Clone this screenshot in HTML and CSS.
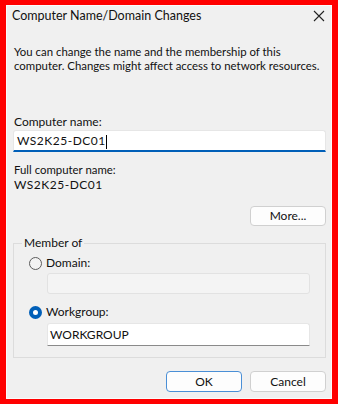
FILE: index.html
```html
<!DOCTYPE html>
<html>
<head>
<meta charset="utf-8">
<link rel="stylesheet" href="styles.css">
</head>
<body>
<div class="dialog">
  <div class="titlebar">
    <span class="title">Computer Name/Domain Changes</span>
    <svg class="close" width="12" height="12" viewBox="0 0 12 12"><path d="M1 1 L11 11 M11 1 L1 11" stroke="#222" stroke-width="1.1" fill="none"/></svg>
  </div>
  <div class="content">
    <p class="desc">You can change the name and the membership of this<br>computer. Changes might affect access to network resources.</p>
    <div class="label lbl-name">Computer name:</div>
    <div class="input focused"><span class="caps">WS2K25-DC01</span><span class="caret"></span></div>
    <div class="label lbl-full">Full computer name:</div>
    <div class="label lbl-value caps">WS2K25-DC01</div>
    <div class="more-row"><button class="btn">More...</button></div>
    <fieldset class="group">
      <legend>Member of</legend>
      <div class="radio-row first"><span class="radio"></span><span>Domain:</span></div>
      <div class="input disabled"></div>
      <div class="radio-row second"><span class="radio checked"></span><span>Workgroup:</span></div>
      <div class="input wg">WORKGROUP</div>
    </fieldset>
    <div class="actions">
      <button class="btn default">OK</button>
      <button class="btn">Cancel</button>
    </div>
  </div>
</div>
</body>
</html>
```
FILE: styles.css
```css
html, body {
  margin: 0;
  padding: 0;
  background: #ff0000;
}
body {
  width: 338px;
  height: 404px;
  overflow: hidden;
  font-family: Lato, "Noto Sans", sans-serif;
  font-size: 12px;
  color: #111;
}
.dialog {
  margin: 5px 0 0 6px;
  width: 324px;
  height: 392px;
  border: 1px solid #fbfbfb;
  background: #f0f0f0;
}
.titlebar {
  height: 20px;
  display: flex;
  align-items: center;
  justify-content: space-between;
  padding: 0 6px 0 5px;
}
.title {
  line-height: 20px;
  font-size: 12.5px;
}
.close {
  display: block;
}
.content {
  padding: 0 5px 0 6px;
}
.desc {
  margin: 19px 0 0 1px;
  line-height: 14px;
  font-size: 11.4px;
  white-space: nowrap;
}
.label {
  line-height: 14px;
  padding-left: 1px;
}
.lbl-name {
  margin-top: 42px;
}
.lbl-full {
  margin-top: 11px;
  font-size: 11.4px;
}
.lbl-value {
  margin-top: 1px;
}
.caps {
  letter-spacing: 0.5px;
}
.input {
  box-sizing: border-box;
  height: 22px;
  margin-top: 1px;
  background: #fff;
  border: 1px solid #e6e6e6;
  border-bottom: 1px solid #8a8a8a;
  border-radius: 3px 3px 0 0;
  padding: 0 3px;
  line-height: 20px;
}
.input.focused {
  border-bottom: 2px solid #005fb8;
}
.caret {
  display: inline-block;
  width: 1px;
  height: 14px;
  background: #000;
  vertical-align: middle;
  margin-left: 0;
}
.more-row {
  display: flex;
  justify-content: flex-end;
  margin-top: 14px;
}
.btn {
  box-sizing: border-box;
  width: 76px;
  height: 20px;
  background: #fdfdfd;
  border: 1px solid #d0d0d0;
  border-radius: 4px;
  font-family: inherit;
  font-size: 12px;
  color: #111;
  padding: 0;
  line-height: 18px;
}
.group {
  margin: 10px 0 0 0;
  padding: 0 15px 11px 15px;
  border: 1px solid #dcdcdc;
  border-radius: 0;
  min-width: 0;
}
.group legend {
  padding: 0 2px;
  margin-left: -7px;
  line-height: 14px;
}
.radio-row {
  display: flex;
  align-items: center;
  gap: 4px;
  line-height: 14px;
  height: 14px;
}
.radio-row.first {
  margin-top: 6px;
}
.radio-row.second {
  margin-top: 11px;
}
.radio {
  box-sizing: border-box;
  width: 13px;
  height: 13px;
  border-radius: 50%;
  border: 1px solid #5c5c5c;
  background: #f3f3f3;
  display: inline-block;
}
.radio.checked {
  border: 4px solid #005fb8;
  background: #fff;
}
.input.disabled {
  margin: 3px 0 0 18px;
  height: 21px;
  background: #f4f4f4;
  border: 1px solid #e2e2e2;
  border-radius: 3px;
}
.input.wg {
  margin: 4px 0 0 18px;
  height: 23px;
  line-height: 21px;
  padding: 0 2px;
}
.actions {
  display: flex;
  justify-content: flex-end;
  gap: 8px;
  margin-top: 13px;
}
.actions .btn {
  height: 21px;
}
.btn.default {
  border-color: #4a8fd6;
}
```
